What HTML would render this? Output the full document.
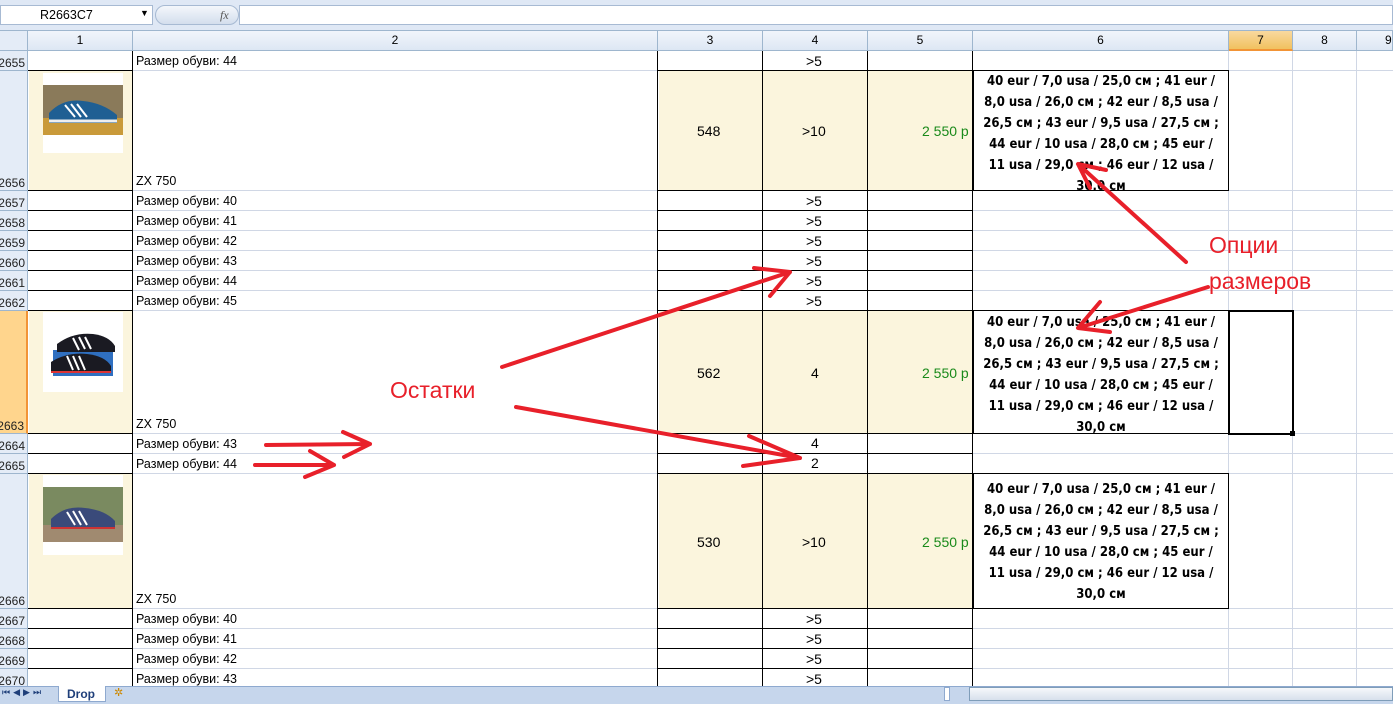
<!DOCTYPE html>
<html><head><meta charset="utf-8">
<style>
*{margin:0;padding:0;box-sizing:border-box}
body{width:1393px;height:704px;overflow:hidden;background:#fff;position:relative;font-family:"Liberation Sans","DejaVu Sans",sans-serif;font-size:12.5px;color:#000}
.a{position:absolute}
.hl{position:absolute;height:1px;background:#d0d7e5}
.vl{position:absolute;width:1px;background:#d0d7e5}
.bl{position:absolute;background:#000}
.rh{position:absolute;left:0;width:28px;background:#e4ecf7;border-bottom:1px solid #9eb6ce;border-right:1px solid #9eb6ce;font-size:12px;text-align:right;padding-right:2px;display:flex;align-items:flex-end;justify-content:flex-end;color:#222}
.ch{position:absolute;top:31px;height:20px;background:linear-gradient(#f1f5fb,#dde7f4);border-right:1px solid #9eb6ce;border-bottom:1px solid #9eb6ce;text-align:center;line-height:19px;font-size:12px}
.t{position:absolute;white-space:nowrap}
.v{position:absolute;white-space:nowrap;font-size:14px}
.sz{position:absolute;left:973px;width:256px;border:1px solid #000;background:#fff;font-weight:bold;font-size:13px;line-height:21px;text-align:center;overflow:hidden;white-space:nowrap;font-family:"DejaVu Sans Condensed","Liberation Sans",sans-serif}
.bg{position:absolute;background:#fbf5dd}
.img{position:absolute;left:43px;width:80px;height:80px;background:#fff}
</style></head><body>
<div class="a" style="left:0;top:0;width:1393px;height:31px;background:#dfe8f5;border-bottom:1px solid #9eb6ce"></div>
<div class="a" style="left:0;top:5px;width:153px;height:20px;background:#fff;border:1px solid #a7bad3"></div>
<div class="t" style="left:40px;top:8px;font-size:12.5px">R2663C7</div>
<div class="t" style="left:140px;top:8px;font-size:9px">▼</div>
<div class="a" style="left:155px;top:5px;width:84px;height:20px;border-radius:10px;background:linear-gradient(#f4f7fb,#d3deed);border:1px solid #a7bad3"></div>
<div class="t" style="left:220px;top:8px;font-family:'Liberation Serif',serif;font-style:italic;font-size:12px;color:#555">fx</div>
<div class="a" style="left:239px;top:5px;width:1154px;height:20px;background:#fff;border:1px solid #a7bad3"></div>
<div class="ch" style="left:0;width:28px;background:#e4ecf7"></div>
<div class="ch" style="left:28px;width:105px">1</div>
<div class="ch" style="left:133px;width:525px">2</div>
<div class="ch" style="left:658px;width:105px">3</div>
<div class="ch" style="left:763px;width:105px">4</div>
<div class="ch" style="left:868px;width:105px">5</div>
<div class="ch" style="left:973px;width:256px">6</div>
<div class="ch" style="left:1229px;width:64px;background:linear-gradient(#f9d99f,#f1c15f);border-bottom:2px solid #f29436">7</div>
<div class="ch" style="left:1293px;width:64px">8</div>
<div class="ch" style="left:1357px;width:36px;text-align:left;padding-left:28px">9</div>
<div class="vl" style="left:1292px;top:51px;height:635px"></div>
<div class="vl" style="left:1356px;top:51px;height:635px"></div>
<div class="vl" style="left:1228px;top:51px;height:635px"></div>
<div class="hl" style="left:28px;top:70px;width:1365px"></div>
<div class="hl" style="left:28px;top:190px;width:1365px"></div>
<div class="hl" style="left:28px;top:210px;width:1365px"></div>
<div class="hl" style="left:28px;top:230px;width:1365px"></div>
<div class="hl" style="left:28px;top:250px;width:1365px"></div>
<div class="hl" style="left:28px;top:270px;width:1365px"></div>
<div class="hl" style="left:28px;top:290px;width:1365px"></div>
<div class="hl" style="left:28px;top:310px;width:1365px"></div>
<div class="hl" style="left:28px;top:433px;width:1365px"></div>
<div class="hl" style="left:28px;top:453px;width:1365px"></div>
<div class="hl" style="left:28px;top:473px;width:1365px"></div>
<div class="hl" style="left:28px;top:608px;width:1365px"></div>
<div class="hl" style="left:28px;top:628px;width:1365px"></div>
<div class="hl" style="left:28px;top:648px;width:1365px"></div>
<div class="hl" style="left:28px;top:668px;width:1365px"></div>
<div class="bg" style="left:29px;top:71px;width:104px;height:120px"></div>
<div class="bg" style="left:659px;top:71px;width:314px;height:120px"></div>
<div class="bg" style="left:29px;top:311px;width:104px;height:123px"></div>
<div class="bg" style="left:659px;top:311px;width:314px;height:123px"></div>
<div class="bg" style="left:29px;top:474px;width:104px;height:135px"></div>
<div class="bg" style="left:659px;top:474px;width:314px;height:135px"></div>
<div class="rh" style="top:51px;height:20px">2655</div>
<div class="rh" style="top:71px;height:120px">2656</div>
<div class="rh" style="top:191px;height:20px">2657</div>
<div class="rh" style="top:211px;height:20px">2658</div>
<div class="rh" style="top:231px;height:20px">2659</div>
<div class="rh" style="top:251px;height:20px">2660</div>
<div class="rh" style="top:271px;height:20px">2661</div>
<div class="rh" style="top:291px;height:20px">2662</div>
<div class="rh" style="top:311px;height:123px;background:#ffd58d;border-right:2px solid #f29436">2663</div>
<div class="rh" style="top:434px;height:20px">2664</div>
<div class="rh" style="top:454px;height:20px">2665</div>
<div class="rh" style="top:474px;height:135px">2666</div>
<div class="rh" style="top:609px;height:20px">2667</div>
<div class="rh" style="top:629px;height:20px">2668</div>
<div class="rh" style="top:649px;height:20px">2669</div>
<div class="rh" style="top:669px;height:20px">2670</div>
<div class="bl" style="left:132px;top:51px;width:1px;height:635px"></div>
<div class="bl" style="left:657px;top:51px;width:1px;height:635px"></div>
<div class="bl" style="left:762px;top:51px;width:1px;height:635px"></div>
<div class="bl" style="left:867px;top:51px;width:1px;height:635px"></div>
<div class="bl" style="left:972px;top:51px;width:1px;height:635px"></div>
<div class="bl" style="left:28px;top:70px;width:105px;height:1px;box-shadow:630px 0 0 #000,735px 0 0 #000,840px 0 0 #000"></div>
<div class="bl" style="left:28px;top:190px;width:105px;height:1px;box-shadow:630px 0 0 #000,735px 0 0 #000,840px 0 0 #000"></div>
<div class="bl" style="left:28px;top:210px;width:105px;height:1px;box-shadow:630px 0 0 #000,735px 0 0 #000,840px 0 0 #000"></div>
<div class="bl" style="left:28px;top:230px;width:105px;height:1px;box-shadow:630px 0 0 #000,735px 0 0 #000,840px 0 0 #000"></div>
<div class="bl" style="left:28px;top:250px;width:105px;height:1px;box-shadow:630px 0 0 #000,735px 0 0 #000,840px 0 0 #000"></div>
<div class="bl" style="left:28px;top:270px;width:105px;height:1px;box-shadow:630px 0 0 #000,735px 0 0 #000,840px 0 0 #000"></div>
<div class="bl" style="left:28px;top:290px;width:105px;height:1px;box-shadow:630px 0 0 #000,735px 0 0 #000,840px 0 0 #000"></div>
<div class="bl" style="left:28px;top:310px;width:105px;height:1px;box-shadow:630px 0 0 #000,735px 0 0 #000,840px 0 0 #000"></div>
<div class="bl" style="left:28px;top:433px;width:105px;height:1px;box-shadow:630px 0 0 #000,735px 0 0 #000,840px 0 0 #000"></div>
<div class="bl" style="left:28px;top:453px;width:105px;height:1px;box-shadow:630px 0 0 #000,735px 0 0 #000,840px 0 0 #000"></div>
<div class="bl" style="left:28px;top:473px;width:105px;height:1px;box-shadow:630px 0 0 #000,735px 0 0 #000,840px 0 0 #000"></div>
<div class="bl" style="left:28px;top:608px;width:105px;height:1px;box-shadow:630px 0 0 #000,735px 0 0 #000,840px 0 0 #000"></div>
<div class="bl" style="left:28px;top:628px;width:105px;height:1px;box-shadow:630px 0 0 #000,735px 0 0 #000,840px 0 0 #000"></div>
<div class="bl" style="left:28px;top:648px;width:105px;height:1px;box-shadow:630px 0 0 #000,735px 0 0 #000,840px 0 0 #000"></div>
<div class="bl" style="left:28px;top:668px;width:105px;height:1px;box-shadow:630px 0 0 #000,735px 0 0 #000,840px 0 0 #000"></div>
<div class="img" style="top:73px"><svg width="80" height="80"><rect x="0" y="12" width="80" height="50" fill="#8a7a5a"/><rect x="0" y="45" width="80" height="17" fill="#c99a3a"/><path d="M6 40 Q20 25 40 28 Q60 30 74 42 L74 50 L6 50Z" fill="#1f5f93"/><path d="M22 32 L32 44 M28 31 L38 44 M34 31 L44 44" stroke="#fff" stroke-width="2"/><path d="M6 48 L74 48" stroke="#eee" stroke-width="3"/></svg></div>
<div class="img" style="top:312px"><svg width="80" height="80"><rect x="10" y="38" width="60" height="26" fill="#2f6fc0"/><path d="M14 32 Q30 20 50 22 Q66 24 72 34 L72 40 L14 40Z" fill="#1a1a22"/><path d="M8 50 Q24 40 44 42 Q62 44 68 54 L68 60 L8 60Z" fill="#1a1a22"/><path d="M30 26 L36 38 M36 25 L42 37 M42 25 L48 37 M24 44 L30 58 M30 44 L36 58 M36 44 L42 58" stroke="#fff" stroke-width="2"/><path d="M8 60 L68 60" stroke="#d33" stroke-width="2"/></svg></div>
<div class="img" style="top:475px"><svg width="80" height="80"><rect x="0" y="12" width="80" height="55" fill="#7a8a60"/><rect x="0" y="50" width="80" height="17" fill="#a08a70"/><path d="M8 44 Q22 30 42 33 Q62 35 72 46 L72 54 L8 54Z" fill="#3a4a7a"/><path d="M24 37 L32 50 M30 36 L38 50 M36 36 L44 50" stroke="#fff" stroke-width="2"/><path d="M8 53 L72 53" stroke="#c33" stroke-width="2"/></svg></div>
<div class="t" style="left:136px;top:54px">Размер обуви: 44</div>
<div class="t" style="left:136px;top:174px">ZX 750</div>
<div class="t" style="left:136px;top:194px">Размер обуви: 40</div>
<div class="t" style="left:136px;top:214px">Размер обуви: 41</div>
<div class="t" style="left:136px;top:234px">Размер обуви: 42</div>
<div class="t" style="left:136px;top:254px">Размер обуви: 43</div>
<div class="t" style="left:136px;top:274px">Размер обуви: 44</div>
<div class="t" style="left:136px;top:294px">Размер обуви: 45</div>
<div class="t" style="left:136px;top:417px">ZX 750</div>
<div class="t" style="left:136px;top:437px">Размер обуви: 43</div>
<div class="t" style="left:136px;top:457px">Размер обуви: 44</div>
<div class="t" style="left:136px;top:592px">ZX 750</div>
<div class="t" style="left:136px;top:612px">Размер обуви: 40</div>
<div class="t" style="left:136px;top:632px">Размер обуви: 41</div>
<div class="t" style="left:136px;top:652px">Размер обуви: 42</div>
<div class="t" style="left:136px;top:672px">Размер обуви: 43</div>
<div class="v" style="left:806px;top:53px">&gt;5</div>
<div class="v" style="left:806px;top:193px">&gt;5</div>
<div class="v" style="left:806px;top:213px">&gt;5</div>
<div class="v" style="left:806px;top:233px">&gt;5</div>
<div class="v" style="left:806px;top:253px">&gt;5</div>
<div class="v" style="left:806px;top:273px">&gt;5</div>
<div class="v" style="left:806px;top:293px">&gt;5</div>
<div class="v" style="left:811px;top:435px">4</div>
<div class="v" style="left:811px;top:455px">2</div>
<div class="v" style="left:806px;top:611px">&gt;5</div>
<div class="v" style="left:806px;top:631px">&gt;5</div>
<div class="v" style="left:806px;top:651px">&gt;5</div>
<div class="v" style="left:806px;top:671px">&gt;5</div>
<div class="v" style="left:697px;top:123px">548</div>
<div class="v" style="left:802px;top:123px">&gt;10</div>
<div class="v" style="left:922px;top:123px;color:#1a8a1a">2 550 р</div>
<div class="v" style="left:697px;top:365px">562</div>
<div class="v" style="left:811px;top:365px">4</div>
<div class="v" style="left:922px;top:365px;color:#1a8a1a">2 550 р</div>
<div class="v" style="left:697px;top:534px">530</div>
<div class="v" style="left:802px;top:534px">&gt;10</div>
<div class="v" style="left:922px;top:534px;color:#1a8a1a">2 550 р</div>
<div class="sz" style="top:70px;height:121px;padding-top:0">40 eur / 7,0 usa / 25,0 см ; 41 eur /<br>8,0 usa / 26,0 см ; 42 eur / 8,5 usa /<br>26,5 см ; 43 eur / 9,5 usa / 27,5 см ;<br>44 eur / 10 usa / 28,0 см ; 45 eur /<br>11 usa / 29,0 см ; 46 eur / 12 usa /<br>30,0 см</div>
<div class="sz" style="top:310px;height:124px;padding-top:1px">40 eur / 7,0 usa / 25,0 см ; 41 eur /<br>8,0 usa / 26,0 см ; 42 eur / 8,5 usa /<br>26,5 см ; 43 eur / 9,5 usa / 27,5 см ;<br>44 eur / 10 usa / 28,0 см ; 45 eur /<br>11 usa / 29,0 см ; 46 eur / 12 usa /<br>30,0 см</div>
<div class="sz" style="top:473px;height:136px;padding-top:5px">40 eur / 7,0 usa / 25,0 см ; 41 eur /<br>8,0 usa / 26,0 см ; 42 eur / 8,5 usa /<br>26,5 см ; 43 eur / 9,5 usa / 27,5 см ;<br>44 eur / 10 usa / 28,0 см ; 45 eur /<br>11 usa / 29,0 см ; 46 eur / 12 usa /<br>30,0 см</div>
<div class="a" style="left:1228px;top:310px;width:66px;height:125px;border:2px solid #000"></div>
<div class="a" style="left:1290px;top:431px;width:5px;height:5px;background:#000"></div>
<div class="a" style="left:0;top:686px;width:1393px;height:18px;background:#c6d6ec;border-top:1px solid #8ea9cf"></div>
<div class="t" style="left:2px;top:687px;font-size:9px;color:#1f3f7a;letter-spacing:3px">⏮◀▶⏭</div>
<div class="a" style="left:58px;top:686px;width:48px;height:16px;background:#fff;border:1px solid #8ea9cf;border-top:none"></div>
<div class="t" style="left:67px;top:687px;font-weight:bold;font-size:12px;color:#1f3f7a">Drop</div>
<div class="t" style="left:114px;top:686px;font-size:11px;color:#c80">✲</div>
<div class="a" style="left:944px;top:687px;width:6px;height:14px;background:#fff;border:1px solid #8ea9cf"></div>
<div class="a" style="left:969px;top:687px;width:424px;height:14px;background:linear-gradient(#f6f8fb,#d7e0ec);border:1px solid #7f9db9"></div>
<svg class="a" style="left:0;top:0" width="1393" height="704">
<g stroke="#e8202a" stroke-width="4" fill="none" stroke-linecap="round" stroke-linejoin="round">
<path d="M1186 262 L1078 164 M1090 188 L1078 164 L1106 170"/>
<path d="M1208 287 L1078 328 M1100 302 L1078 328 L1110 332"/>
<path d="M502 367 L790 272 M754 268 L790 272 L770 296"/>
<path d="M516 407 L800 458 M749 436 L800 458 L743 466"/>
<path d="M266 445 L370 444 M343 432 L370 444 L344 457"/>
<path d="M255 465 L334 465 M310 451 L334 465 L305 477"/>
</g>
<g font-family="Liberation Sans, sans-serif" font-size="23" fill="#e8202a">
<text x="390" y="398">Остатки</text>
<text x="1209" y="253">Опции</text>
<text x="1209" y="289">размеров</text>
</g>
</svg>
</body></html>
